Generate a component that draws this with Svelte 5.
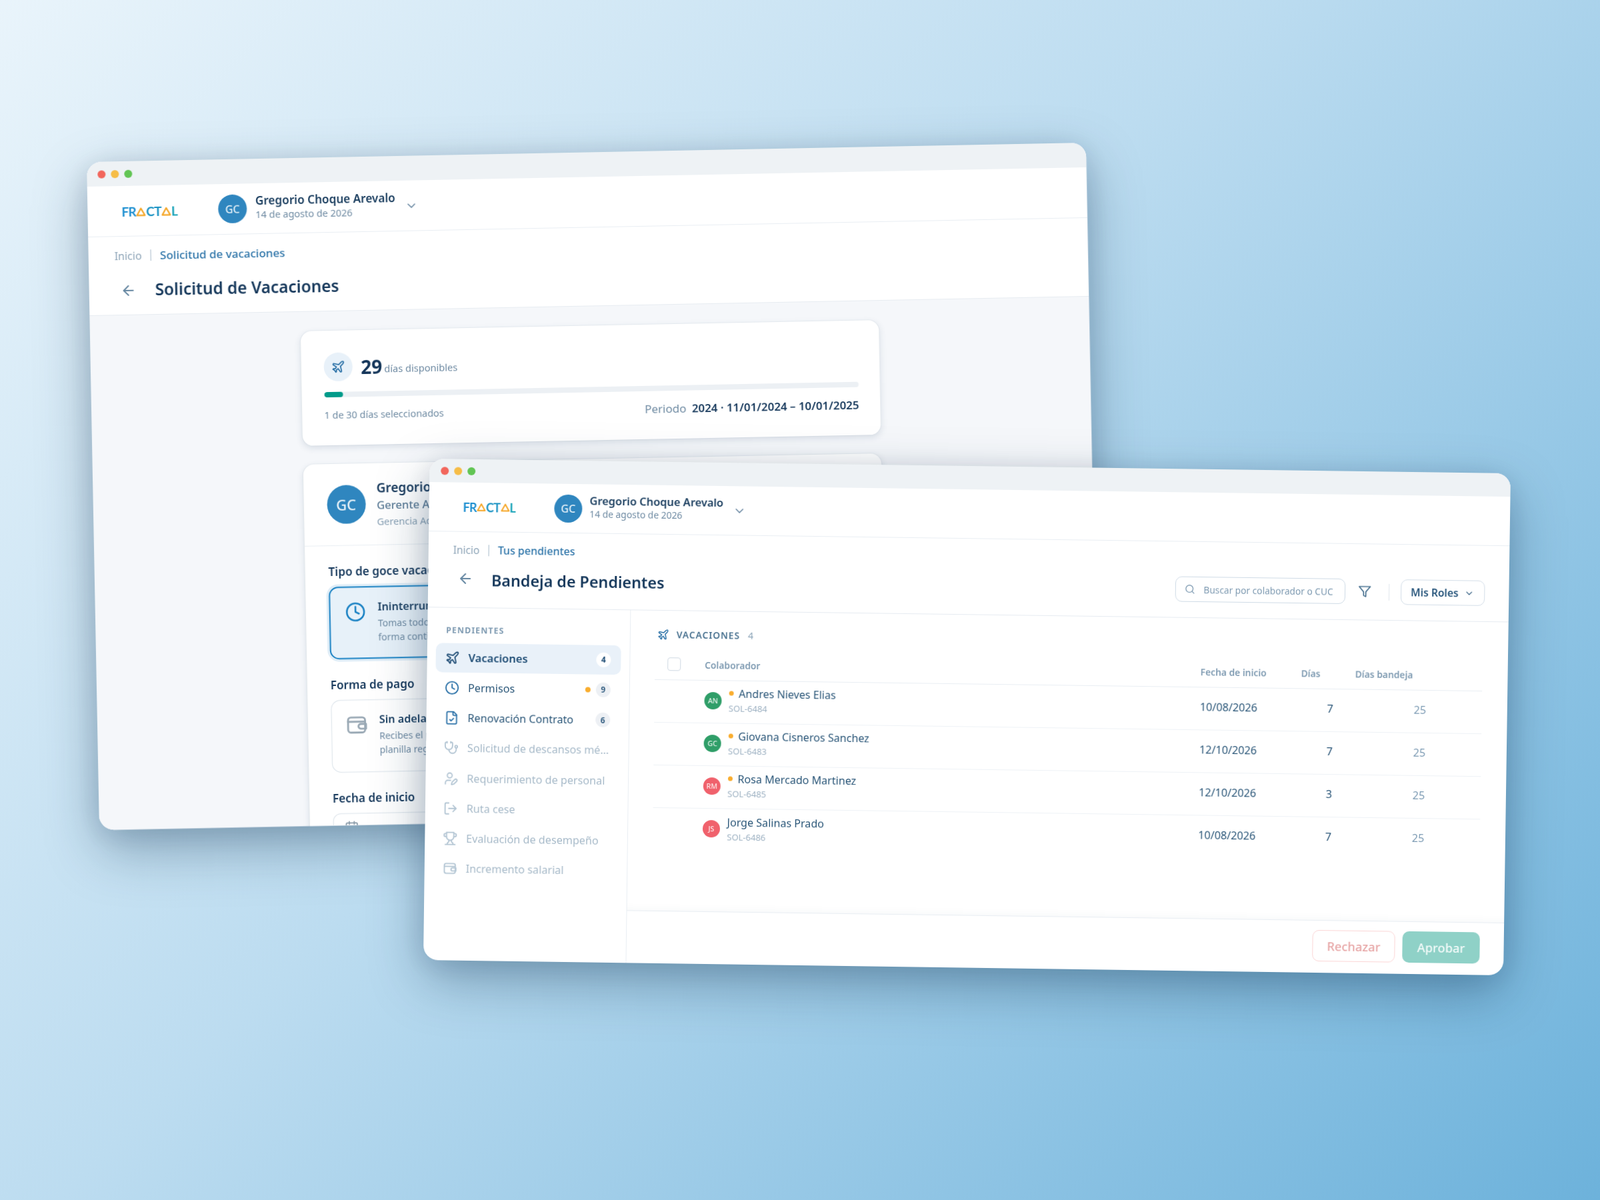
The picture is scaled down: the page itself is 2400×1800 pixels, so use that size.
<script>
  const ICONS = {
    plane: ["M17.8 19.2 16 11l3.5-3.5C21 6 21.5 4 21 3c-1-.5-3 0-4.5 1.5L13 8 4.8 6.2c-.5-.1-.9.1-1.1.5l-.3.5c-.2.5-.1 1 .3 1.3L9 12l-2 3H4l-1 1 3 2 2 3 1-1v-3l3-2 3.5 5.3c.3.4.8.5 1.3.3l.5-.2c.4-.3.6-.7.5-1.2z"],
    clock: ["M22 12a10 10 0 1 1-20 0 10 10 0 0 1 20 0z", "M12 6v6l4 2"],
    file: ["M15 2H6a2 2 0 0 0-2 2v16a2 2 0 0 0 2 2h12a2 2 0 0 0 2-2V7Z", "M14 2v4a2 2 0 0 0 2 2h4", "m9 15 2 2 4-4"],
    steth: ["M11 2v2", "M5 2v2", "M5 3H4a2 2 0 0 0-2 2v4a6 6 0 0 0 12 0V5a2 2 0 0 0-2-2h-1", "M8 15a6 6 0 0 0 12 0v-3", "M22 10a2 2 0 1 1-4 0 2 2 0 0 1 4 0z"],
    userpen: ["M11.5 15H7a4 4 0 0 0-4 4v2", "M21.378 16.626a1 1 0 0 0-3.004-3.004l-4.01 4.012a2 2 0 0 0-.506.854l-.837 2.87a.5.5 0 0 0 .62.62l2.87-.837a2 2 0 0 0 .854-.506z", "M14 7a4 4 0 1 1-8 0 4 4 0 0 1 8 0z"],
    exit: ["M9 21H5a2 2 0 0 1-2-2V5a2 2 0 0 1 2-2h4", "m16 17 5-5-5-5", "M21 12H9"],
    trophy: ["M6 9H4.5a2.5 2.5 0 0 1 0-5H6", "M18 9h1.5a2.5 2.5 0 0 0 0-5H18", "M4 22h16", "M10 14.66V17c0 .55-.47.98-.97 1.21C7.85 18.75 7 20.24 7 22", "M14 14.66V17c0 .55.47.98.97 1.21C16.15 18.75 17 20.24 17 22", "M18 2H6v7a6 6 0 0 0 12 0V2Z"],
    wallet: ["M6 4h12a3 3 0 0 1 3 3v10a3 3 0 0 1-3 3H6a3 3 0 0 1-3-3V7a3 3 0 0 1 3-3z", "M3 8.5h18", "M16.5 11H22v5h-5.5a2.5 2.5 0 0 1 0-5z"],
    search: ["M19 11a8 8 0 1 1-16 0 8 8 0 0 1 16 0z", "m21 21-4.3-4.3"],
    filter: ["M22 3H2l8 9.46V19l4 2v-8.54L22 3z"],
    chevron: ["m6 9 6 6 6-6"],
    back: ["m12 19-7-7 7-7", "M19 12H5"],
    calendar: ["M8 2v4", "M16 2v4", "M5 4h14a2 2 0 0 1 2 2v14a2 2 0 0 1-2 2H5a2 2 0 0 1-2-2V6a2 2 0 0 1 2-2z", "M3 10h18"]
  };

  function quad(w, h, p) {
    const [[x0, y0], [x1, y1], [x2, y2], [x3, y3]] = p;
    const dx1 = x1 - x2, dx2 = x3 - x2, sx = x0 - x1 + x2 - x3;
    const dy1 = y1 - y2, dy2 = y3 - y2, sy = y0 - y1 + y2 - y3;
    const det = dx1 * dy2 - dx2 * dy1;
    const g = (sx * dy2 - dx2 * sy) / det;
    const k = (dx1 * sy - sx * dy1) / det;
    const a = x1 - x0 + g * x1, b = x3 - x0 + k * x3;
    const d = y1 - y0 + g * y1, e = y3 - y0 + k * y3;
    return `matrix3d(${a / w},${d / w},0,${g / w},${b / h},${e / h},0,${k / h},0,0,1,0,${x0},${y0},0,1)`;
  }

  const backTransform = quad(1500, 1002, [[130, 243], [1629, 214], [1648, 1216], [149, 1245]]);
  const frontTransform = quad(1621, 752, [[644.5, 688], [2266, 710], [2255, 1463], [635, 1440]]);

  const menu = [
    { label: "Vacaciones", icon: "plane", badge: 4, active: true },
    { label: "Permisos", icon: "clock", badge: 9, dot: true },
    { label: "Renovación Contrato", icon: "file", badge: 6 },
    { label: "Solicitud de descansos médicos", icon: "steth", off: true },
    { label: "Requerimiento de personal", icon: "userpen", off: true },
    { label: "Ruta cese", icon: "exit", off: true },
    { label: "Evaluación de desempeño", icon: "trophy", off: true },
    { label: "Incremento salarial", icon: "wallet", off: true }
  ];

  const rows = [
    { ini: "AN", tone: "green", name: "Andres Nieves Elias", code: "SOL-6484", date: "10/08/2026", days: 7, dot: true },
    { ini: "GC", tone: "green", name: "Giovana Cisneros Sanchez", code: "SOL-6483", date: "12/10/2026", days: 7, dot: true },
    { ini: "RM", tone: "red", name: "Rosa Mercado Martinez", code: "SOL-6485", date: "12/10/2026", days: 3, dot: true },
    { ini: "JS", tone: "red", name: "Jorge Salinas Prado", code: "SOL-6486", date: "10/08/2026", days: 7, dot: false }
  ];
</script>

{#snippet icon(name, size, cls = "")}
  <svg class={cls} width={size} height={size} viewBox="0 0 24 24" fill="none" stroke="currentColor" stroke-width="2" stroke-linecap="round" stroke-linejoin="round">
    {#each ICONS[name] as d}<path {d} />{/each}
  </svg>
{/snippet}

{#snippet tri(size)}
  <svg class="tri" width={size} height={size} viewBox="0 0 20 20" fill="none" stroke="#f5a524" stroke-width="3" stroke-linejoin="round"><path d="M10 3 18.5 18h-17z" /></svg>
{/snippet}

{#snippet logo(size)}
  <div class="logo"><span class="l1">FR</span>{@render tri(size)}<span class="l2">CT</span>{@render tri(size)}<span class="l3">L</span></div>
{/snippet}

{#snippet lights()}
  <div class="titlebar"><i class="red"></i><i class="amber"></i><i class="lime"></i></div>
{/snippet}

<div class="scene">
  <section class="window back" style="transform:{backTransform}">
    {@render lights()}
    <header class="topbar">
      {@render logo(14)}
      <div class="avatar big">GC</div>
      <div class="who">
        <div class="who-name">Gregorio Choque Arevalo</div>
        <div class="who-date">14 de agosto de 2026</div>
      </div>
      {@render icon("chevron", 20, "chev")}
    </header>
    <div class="pagehead">
      <div class="crumb"><span class="c1">Inicio</span><span class="csep"></span><span class="c2">Solicitud de vacaciones</span></div>
      <div class="titlerow">
        {@render icon("back", 24, "arrow")}
        <h1>Solicitud de Vacaciones</h1>
      </div>
    </div>
    <div class="content">
      <div class="card summary">
        <div class="sum-top">
          <div class="sum-icon">{@render icon("plane", 21)}</div>
          <strong>29</strong><span>días disponibles</span>
        </div>
        <div class="bar"><div class="fill"></div></div>
        <div class="sum-foot">
          <span class="sel">1 de 30 días seleccionados</span>
          <span class="period">Periodo <b>2024 · 11/01/2024 – 10/01/2025</b></span>
        </div>
      </div>
      <div class="card form">
        <div class="person">
          <div class="avatar huge">GC</div>
          <div class="p-text">
            <div class="p-name">Gregorio Choque Arevalo</div>
            <div class="p-role">Gerente Administrativo</div>
            <div class="p-area">Gerencia Administrativa</div>
          </div>
        </div>
        <div class="fields">
          <h3 class="first">Tipo de goce vacacional</h3>
          <div class="option on">
            {@render icon("clock", 31, "o-ic")}
            <div>
              <div class="o-title">Ininterrumpido</div>
              <div class="o-sub">Tomas todos tus días de<br />forma continua</div>
            </div>
          </div>
          <h3>Forma de pago</h3>
          <div class="option">
            {@render icon("wallet", 34, "o-ic gray")}
            <div>
              <div class="o-title">Sin adelanto</div>
              <div class="o-sub">Recibes el pago en tu<br />planilla regular</div>
            </div>
          </div>
          <h3>Fecha de inicio</h3>
          <div class="datefield">{@render icon("calendar", 22)}</div>
        </div>
      </div>
    </div>
  </section>

  <section class="window front" style="transform:{frontTransform}">
    {@render lights()}
    <header class="topbar ftop">
      {@render logo(13)}
      <div class="avatar">GC</div>
      <div class="who">
        <div class="who-name">Gregorio Choque Arevalo</div>
        <div class="who-date">14 de agosto de 2026</div>
      </div>
      {@render icon("chevron", 20, "chev")}
    </header>
    <div class="pagehead fhead">
      <div class="crumb"><span class="c1">Inicio</span><span class="csep"></span><span class="c2">Tus pendientes</span></div>
      <div class="titlerow">
        {@render icon("back", 24, "arrow")}
        <h1>Bandeja de Pendientes</h1>
        <div class="tools">
          <div class="search">{@render icon("search", 16)}<span>Buscar por colaborador o CUC</span></div>
          {@render icon("filter", 20, "funnel")}
          <span class="vsep"></span>
          <div class="roles"><span>Mis Roles</span>{@render icon("chevron", 15)}</div>
        </div>
      </div>
    </div>
    <div class="split">
      <aside class="side">
        <div class="side-title">PENDIENTES</div>
        <nav>
          {#each menu as m}
            <div class="item" class:active={m.active} class:off={m.off}>
              {@render icon(m.icon, 22, "i-ic")}
              <span class="i-label">{m.label}</span>
              {#if m.dot}<i class="orange"></i>{/if}
              {#if m.badge}<b class="badge">{m.badge}</b>{/if}
            </div>
          {/each}
        </nav>
      </aside>
      <main class="main">
        <div class="list">
          <div class="sec-head">{@render icon("plane", 18)}<span class="sec-t">VACACIONES</span><span class="sec-n">4</span></div>
          <div class="grid thead">
            <span class="check"></span>
            <span>Colaborador</span>
            <span>Fecha de inicio</span>
            <span>Días</span>
            <span>Días bandeja</span>
          </div>
          {#each rows as r}
            <div class="grid trow">
              <span></span>
              <div class="collab">
                <div class="mini {r.tone}">{r.ini}</div>
                <div>
                  <div class="r-name">{#if r.dot}<i class="orange small"></i>{/if}{r.name}</div>
                  <div class="r-code">{r.code}</div>
                </div>
              </div>
              <span class="r-val">{r.date}</span>
              <span class="r-val r-days">{r.days}</span>
              <span class="r-val r-band">25</span>
            </div>
          {/each}
        </div>
        <footer class="actions">
          <div class="btn no">Rechazar</div>
          <div class="btn yes">Aprobar</div>
        </footer>
      </main>
    </div>
  </section>
</div>

<style>
  :global(body) { margin: 0; }
  .scene {
    position: relative;
    width: 2400px;
    height: 1800px;
    overflow: hidden;
    background: linear-gradient(135deg, #e9f4fb 0%, #bcdcf0 45%, #6db2db 100%);
    font-family: "Noto Sans", "Open Sans", sans-serif;
    color: #17395c;
  }
  .window {
    position: absolute;
    left: 0;
    top: 0;
    transform-origin: 0 0;
    background: #fff;
    border-radius: 22px;
    overflow: hidden;
    box-shadow: 0 30px 80px rgba(18, 52, 84, 0.36), 0 6px 40px rgba(18, 52, 84, 0.12);
    display: flex;
    flex-direction: column;
    filter: blur(0.45px);
  }
  .back { width: 1500px; height: 1002px; }
  .front { width: 1621px; height: 752px; }

  .titlebar {
    height: 35px;
    flex: none;
    background: #eef2f5;
    display: flex;
    align-items: center;
    gap: 8px;
    padding-left: 16px;
  }
  .back .titlebar { height: 37px; }
  .front .titlebar { padding-left: 17px; }
  .titlebar i { width: 12px; height: 12px; border-radius: 50%; }
  .red { background: #f2665c; }
  .amber { background: #f6bd47; }
  .lime { background: #62c554; }

  .topbar {
    height: 76px;
    flex: none;
    display: flex;
    align-items: center;
    padding-left: 50px;
    border-bottom: 1.5px solid #e9eef3;
    box-sizing: border-box;
  }
  .ftop { height: 74px; }
  .logo {
    width: 145px;
    margin: 3px 0 0 1px;
    flex: none;
    display: flex;
    align-items: center;
    font-family: "Lato", sans-serif;
    font-weight: 700;
    font-size: 19px;
    line-height: 20px;
    letter-spacing: -0.6px;
  }
  .ftop .logo { width: 137px; font-size: 18px; margin-top: 0; }
  .l1 { color: #1b8ed0; }
  .l2 { color: #1d94c4; }
  .l3 { color: #19a3b8; }
  .tri { flex: none; margin: 0 0.5px; }
  .avatar {
    width: 42px;
    height: 42px;
    flex: none;
    border-radius: 50%;
    background: #2f86bf;
    color: #e7f2f9;
    display: flex;
    align-items: center;
    justify-content: center;
    font-size: 16px;
    font-weight: 500;
  }
  .avatar.big { width: 43px; height: 43px; }
  .avatar.huge { width: 58px; height: 58px; font-size: 22px; }
  .who { margin: 0 0 5px 13px; }
  .ftop .who { margin: 0 0 5px 11px; }
  .who-name { font-size: 17.15px; line-height: 23px; font-weight: 600; color: #1c3f60; }
  .who-date { font-size: 14.45px; line-height: 20px; color: #6f8ba3; }
  .ftop .who-name { font-size: 16.4px; line-height: 21px; margin-bottom: 1.5px; }
  .ftop .who-date { font-size: 13.85px; line-height: 18px; }
  .chev { color: #6a88a2; margin-left: 14px; }

  .pagehead { flex: none; border-bottom: 1.5px solid #e6ebf1; padding: 18.5px 0 22px; box-sizing: border-box; }
  .fhead { padding: 17px 0 23px; }
  .crumb { display: flex; align-items: center; padding-left: 39px; font-size: 16px; line-height: 20px; }
  .fhead .crumb { padding-left: 37px; font-size: 15.5px; }
  .c1 { color: #8ea5b8; }
  .c2 { color: #2b73a8; font-weight: 500; font-size: 17px; }
  .fhead .c2 { font-size: 16px; }
  .csep { width: 1.5px; height: 17px; background: #a9bccb; margin: 0 13px; }
  .titlerow { display: flex; align-items: center; margin-top: 24.5px; padding-left: 47px; height: 32px; }
  .fhead .titlerow { margin-top: 15px; height: 38px; padding-left: 44px; }
  .arrow { color: #6486a1; flex: none; margin-top: 3px; }
  .fhead .arrow { margin-top: -2px; }
  h1 { margin: 1px 0 0 28px; font-size: 24.4px; line-height: 32px; font-weight: 600; color: #17395c; }
  .fhead h1 { font-size: 23.3px; margin: 1px 0 0 27px; }
  .tools { margin-left: auto; display: flex; align-items: center; padding-right: 36px; }
  .search {
    width: 255px;
    height: 38px;
    box-sizing: border-box;
    border: 1.5px solid #cfdbe6;
    border-radius: 10px;
    display: flex;
    align-items: center;
    gap: 12.5px;
    padding-left: 13px;
    color: #7f9bb2;
    font-size: 13.7px;
    white-space: nowrap;
  }
  .funnel { color: #47708f; margin-left: 18.5px; flex: none; }
  .vsep { width: 1.5px; height: 25px; background: #e1e7ed; margin: 0 17px 0 26px; }
  .roles {
    width: 126px;
    height: 38px;
    box-sizing: border-box;
    border: 1.5px solid #d4dee8;
    border-radius: 10px;
    display: flex;
    align-items: center;
    gap: 8px;
    padding-left: 14px;
    font-size: 15.6px;
    font-weight: 600;
    color: #27557b;
  }

  .content {
    flex: 1;
    background: #f5f7fa;
    display: flex;
    flex-direction: column;
    align-items: center;
    gap: 28px;
    padding-top: 29px;
  }
  .card {
    width: 868px;
    box-sizing: border-box;
    background: #fff;
    border-radius: 16px;
    box-shadow: 0 3px 10px rgba(40, 70, 105, 0.13), 0 0 0 1px rgba(60, 90, 120, 0.05);
    flex: none;
  }
  .summary { height: 171.5px; padding: 33px 32px 32px 33.5px; }
  .sum-top { display: flex; align-items: center; }
  .sum-icon {
    width: 43px;
    height: 43px;
    border-radius: 50%;
    background: #e8f1f9;
    color: #2c72a8;
    display: flex;
    align-items: center;
    justify-content: center;
    margin-right: 13px;
  }
  .sum-top strong { font-size: 28px; line-height: 36px; font-weight: 700; color: #15365a; }
  .sum-top span { font-size: 14.6px; color: #6f8ba3; margin: 7px 0 0 3px; }
  .bar { height: 8px; border-radius: 4px; background: #ecf0f4; margin-top: 15.5px; overflow: hidden; }
  .fill { width: 28px; height: 100%; border-radius: 4px; background: #009b8a; }
  .sum-foot { display: flex; justify-content: space-between; align-items: center; margin-top: 14.5px; height: 24px; }
  .sel { font-size: 14.45px; color: #6f8ba3; }
  .period { font-size: 17px; color: #6f8ba3; }
  .period b { font-size: 16.9px; font-weight: 600; color: #17395c; margin-left: 4px; }

  .form { height: 660px; overflow: hidden; }
  .person {
    height: 123px;
    box-sizing: border-box;
    padding: 0 0 0 34.5px;
    display: flex;
    align-items: center;
    gap: 17px;
    border-bottom: 1.5px solid #e9eef3;
  }
  .p-text { padding-top: 3px; }
  .p-name { font-size: 19px; line-height: 25px; font-weight: 600; color: #17395c; }
  .p-role { font-size: 16.6px; line-height: 26px; color: #5c7c97; font-weight: 500; }
  .p-area { font-size: 14.6px; line-height: 23px; color: #89a1b5; }
  .fields { padding: 28px 33px 28px 35px; }
  h3 { margin: 28px 0 11.5px; font-size: 17.2px; line-height: 22px; font-weight: 600; color: #17395c; }
  h3.first { margin-top: 0; }
  .option {
    width: 410px;
    height: 108.5px;
    box-sizing: border-box;
    border: 1.5px solid #dbe3ea;
    border-radius: 14px;
    display: flex;
    gap: 18px;
    padding: 18px 22px;
    background: #fff;
  }
  .option.on {
    background: #e7f1f9;
    border: 2px solid #1a82c4;
    box-shadow: 0 0 0 3.5px rgba(26, 130, 196, 0.14);
  }
  .o-ic { color: #1a82c4; flex: none; margin-top: 3px; }
  .o-ic.gray { color: #9aa9b5; margin: 2px -1px 0 -2px; }
  .o-title { font-size: 16.2px; line-height: 23px; font-weight: 600; color: #1d4163; }
  .o-sub { font-size: 14px; line-height: 21px; color: #6f8ba3; margin-top: 2px; white-space: nowrap; }
  .datefield {
    width: 410px;
    height: 56px;
    box-sizing: border-box;
    border: 1.5px solid #dbe3ea;
    border-radius: 12px;
    padding: 10px 16px;
    color: #8a9ba9;
  }

  .split { flex: 1; display: flex; min-height: 0; }
  .side { width: 305px; flex: none; box-sizing: border-box; border-right: 1.5px solid #e9eef3; padding: 25px 13px 0; }
  .side-title { font-size: 12.4px; line-height: 18px; font-weight: 700; letter-spacing: 1.1px; color: #7f9bb2; padding-left: 15px; margin-bottom: 10px; }
  nav { display: flex; flex-direction: column; gap: 1.7px; }
  .item {
    height: 43.5px;
    box-sizing: border-box;
    display: flex;
    align-items: center;
    border-radius: 10px;
    padding: 0 15px 0 14px;
    font-size: 16.2px;
    color: #2a5678;
  }
  .i-ic { flex: none; color: #2c72a8; margin-right: 13px; }
  .i-label { flex: 1; min-width: 0; overflow: hidden; text-overflow: ellipsis; white-space: nowrap; }
  .item.active { background: #e9f1f9; font-weight: 600; color: #1f4d75; font-size: 16.5px; }
  .item.active .i-ic { color: #1f4d75; }
  .item.off { color: #a7bac9; padding-right: 9px; }
  .item.off .i-ic { color: #b4c6d4; }
  .orange { width: 8px; height: 8px; border-radius: 50%; background: #f9ad2e; flex: none; margin-right: 8px; }
  .badge {
    width: 22px;
    height: 22px;
    flex: none;
    border-radius: 50%;
    background: #edf0f4;
    display: flex;
    align-items: center;
    justify-content: center;
    font-size: 12px;
    font-weight: 700;
    color: #3b6486;
  }
  .item.active .badge { background: #fff; color: #1f4d75; }

  .main { flex: 1; min-width: 0; display: flex; flex-direction: column; }
  .list { flex: 1; padding: 25.5px 38px 0 37px; box-shadow: inset 0 -14px 14px -14px rgba(40, 70, 105, 0.05); }
  .sec-head { display: flex; align-items: center; height: 20px; padding-left: 3px; color: #2c72a8; }
  .sec-t { margin-left: 11px; font-size: 13.7px; font-weight: 600; letter-spacing: 1px; color: #48718f; }
  .sec-n { margin-left: 12px; font-size: 14px; color: #8ca5b9; }
  .grid { display: grid; grid-template-columns: 75px 743.5px 151px 81px 1fr; align-items: center; }
  .thead {
    height: 58px;
    box-sizing: border-box;
    border-bottom: 1.5px solid #e9eef3;
    padding-top: 12px;
    font-size: 13.8px;
    font-weight: 600;
    color: #7f9bb2;
  }
  .check {
    width: 20px;
    height: 20px;
    box-sizing: border-box;
    border: 1.5px solid #cfd9e3;
    border-radius: 4px;
    margin-left: 19px;
  }
  .trow { height: 64px; box-sizing: border-box; border-bottom: 1.5px solid #eef2f6; padding-bottom: 3px; }
  .trow:last-child { border-bottom: 0; }
  .collab { display: flex; align-items: center; gap: 10.5px; }
  .mini {
    width: 26px;
    height: 26px;
    flex: none;
    border-radius: 50%;
    color: #e4f3ea;
    display: flex;
    align-items: center;
    justify-content: center;
    font-size: 10.5px;
    font-weight: 500;
  }
  .green { background: #2f9e68; }
  .red { background: #f2665c; }
  .mini.red { background: #f0616c; color: #fde9ea; }
  .r-name { display: flex; align-items: center; font-size: 16.1px; line-height: 20px; color: #2a5678; }
  .orange.small { width: 7px; height: 7px; margin: -2px 8px 0 0; }
  .r-code { font-size: 13px; line-height: 18px; margin-top: 3px; color: #9db1c2; }
  .r-val { font-size: 16.2px; color: #2a5678; padding-bottom: 1.5px; }
  .r-days { margin-left: 39.5px; }
  .r-band { margin-left: 88.5px; color: #7b9ab3; font-size: 16px; }

  .actions {
    height: 79px;
    flex: none;
    box-sizing: border-box;
    border-top: 1.5px solid #e9eef3;
    display: flex;
    justify-content: flex-end;
    align-items: center;
    gap: 11px;
    padding: 0 36px 3px 0;
  }
  .btn {
    height: 47px;
    box-sizing: border-box;
    border-radius: 10px;
    display: flex;
    align-items: center;
    justify-content: center;
    font-size: 18.3px;
    font-weight: 500;
  }
  .no { width: 124px; border: 1.5px solid #fbd6d6; color: #e7a5a5; }
  .yes { width: 116px; background: #8fd1c7; color: #f4fbfa; }
</style>
